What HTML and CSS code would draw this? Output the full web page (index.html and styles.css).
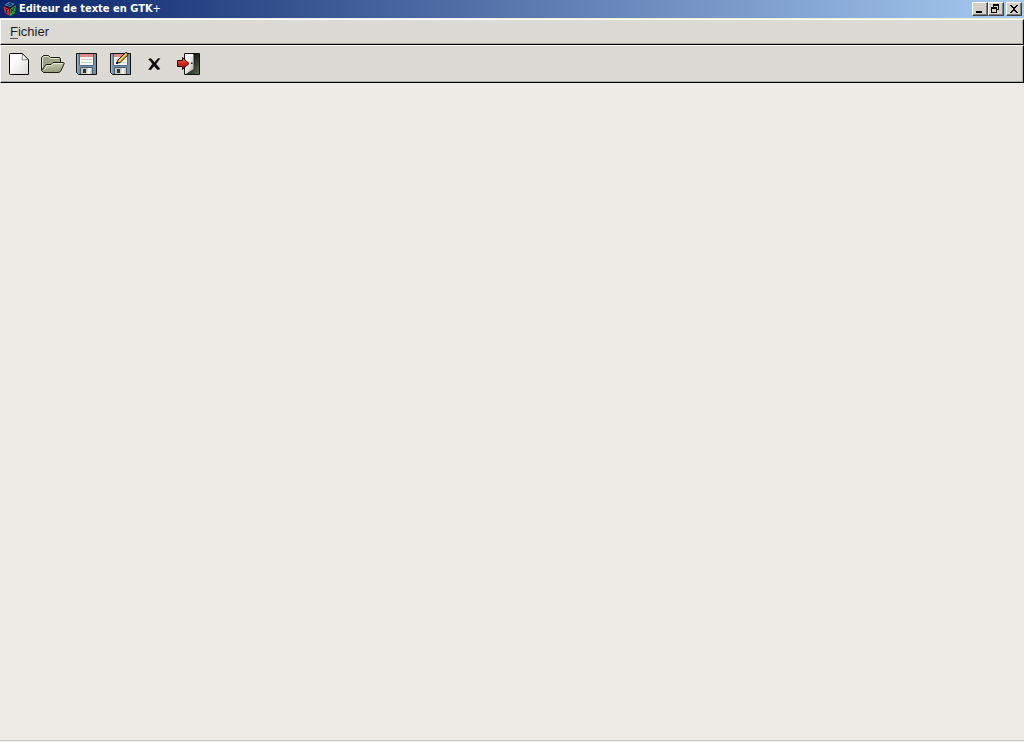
FILE: index.html
```html
<!DOCTYPE html>
<html lang="fr">
<head>
    <meta charset="UTF-8">
    <meta name="viewport" content="width=device-width, initial-scale=1.0">
    <title>Editeur de texte en GTK+</title>
    <link rel="stylesheet" href="styles.css">
</head>
<body>

    <header class="titlebar">
        <!-- Logo GTK -->
        <svg class="logo" viewBox="0 0 16 16" aria-hidden="true">
            <path d="M1 4L7 1L14 3L13 12L8 15L3 12Z" fill="#15182c"/>
            <path d="M1 5L7 8L8 15L3 12Z" fill="#e3203c"/>
            <path d="M14 4L8 8V15L13 12Z" fill="#2fa04c"/>
            <path d="M2 4L7 1L13 3L8 6Z" fill="#3c7cc4"/>
            <path d="M5 3.500L8 4.500L10 3M7 2.500L9 3" fill="none" stroke="#101c3c"/>
            <path d="M3 7.500L6 9M4.500 8V12" fill="none" stroke="#34101c"/>
            <path d="M9.500 8V12M12.500 6L10.500 9.500L12.500 10.500" fill="none" stroke="#0c2c1c"/>
        </svg>
        <h1 class="title">Editeur de texte en GTK<span class="plus">+</span></h1>
        <div class="controls">
            <button type="button" class="control" aria-label="Réduire">
                <svg viewBox="0 0 12 10" shape-rendering="crispEdges"><path d="M2 7h6v2H2z"/></svg>
            </button>
            <button type="button" class="control" aria-label="Restaurer">
                <svg viewBox="0 0 12 10" shape-rendering="crispEdges"><path d="M3 0h6v6H7V5h1V2H4v1H3zM1 3h6v6H1zM2 5v3h4V5z" fill-rule="evenodd"/></svg>
            </button>
            <button type="button" class="control close" aria-label="Fermer">
                <svg viewBox="0 0 12 10" shape-rendering="crispEdges"><path d="M2 1h2v1h1v1h2V2h1V1h2v1H9v1H8v1H7v2h1v1h1v1h1v1H8V8H7V7H5v1H4v1H2V8h1V7h1V6h1V4H4V3H3V2H2z"/></svg>
            </button>
        </div>
    </header>

    <nav class="menubar">
        <button type="button" class="menu"><span class="mnemonic">F</span>ichier</button>
    </nav>

    <div class="toolbar" role="toolbar" aria-label="Outils">
        <!-- Nouveau -->
        <button type="button" class="tool" aria-label="Nouveau">
            <svg viewBox="0 0 24 24">
                <defs>
                    <linearGradient id="paper" x1="0" y1="0" x2="1" y2="1">
                        <stop offset="0.3" stop-color="#ffffff"/>
                        <stop offset="1" stop-color="#d8d8d2"/>
                    </linearGradient>
                </defs>
                <path d="M3.500 1.500H15.500L21.500 7.500V22.500H3.500Q2.500 22.500 2.500 21.500V2.500Q2.500 1.500 3.500 1.500Z" fill="url(#paper)" stroke="#000"/>
                <path d="M15.500 2L15 8L21 7.500Z" fill="#fff" stroke="#555" stroke-width="0.7"/>
            </svg>
        </button>
        <!-- Ouvrir -->
        <button type="button" class="tool" aria-label="Ouvrir">
            <svg viewBox="0 0 24 24">
                <defs>
                    <linearGradient id="folder" x1="0" y1="0" x2="0" y2="1">
                        <stop offset="0" stop-color="#c6cab0"/>
                        <stop offset="1" stop-color="#949a7a"/>
                    </linearGradient>
                </defs>
                <path d="M0.500 18.500V5.500L2.500 3.500H7.500L9.500 5.500H18.500L19.500 7V10" fill="#9ea388" stroke="#1c1f12"/>
                <path d="M1.500 16V6L3 4.500H7L9 6.500H18" fill="none" stroke="#dfe3ca"/>
                <path d="M0.500 18.500L5 12.500H10L12 10.500H22.500Q23.500 10.500 23 12L20 18.500Q19 20.500 17.500 20.500H2.500Z" fill="url(#folder)" stroke="#1c1f12"/>
                <path d="M3.500 17.500L6 13.500H10.500L12.500 11.500H22" fill="none" stroke="#e6e9d4"/>
            </svg>
        </button>
        <!-- Enregistrer -->
        <button type="button" class="tool" aria-label="Enregistrer">
            <svg viewBox="0 0 24 24">
                <path d="M1.500 1.500H21.500V22.500H3.500L1.500 20.500Z" fill="#7392aa" stroke="#111"/>
                <path d="M2.500 20V2.500" stroke="#9bb8cf"/>
                <path d="M5 2H18V13H5Z" fill="#f8f8f4"/>
                <path d="M5 2H18V5H5Z" fill="#df8888"/>
                <path d="M6 7.500H17M6 10.500H17" stroke="#cfcfcb"/>
                <path d="M4.500 2V12.500Q4.500 13.500 5.500 13.500H17.500Q18.500 13.500 18.500 12.500V2" fill="none" stroke="#53697c"/>
                <path d="M6 15H17V22H6Z" fill="#c6c6be"/>
                <path d="M5.500 22V15.500H17.500V22" fill="none" stroke="#4c5c6c"/>
                <path d="M8 17H11V21H8Z" fill="#333"/>
                <path d="M13 16L12 22H15L16 16Z" fill="#eeeeea"/>
            </svg>
        </button>
        <!-- Enregistrer sous -->
        <button type="button" class="tool" aria-label="Enregistrer sous">
            <svg viewBox="0 0 24 24">
                <path d="M1.500 1.500H21.500V22.500H3.500L1.500 20.500Z" fill="#7392aa" stroke="#111"/>
                <path d="M2.500 20V2.500" stroke="#9bb8cf"/>
                <path d="M5 2H18V13H5Z" fill="#f8f8f4"/>
                <path d="M5 2H18V5H5Z" fill="#df8888"/>
                <path d="M6 7.500H17M6 10.500H17" stroke="#cfcfcb"/>
                <path d="M4.500 2V12.500Q4.500 13.500 5.500 13.500H17.500Q18.500 13.500 18.500 12.500V2" fill="none" stroke="#53697c"/>
                <path d="M6 15H17V22H6Z" fill="#c6c6be"/>
                <path d="M5.500 22V15.500H17.500V22" fill="none" stroke="#4c5c6c"/>
                <path d="M8 17H11V21H8Z" fill="#333"/>
                <path d="M13 16L12 22H15L16 16Z" fill="#eeeeea"/>
                <path d="M7.500 11.500L9 8L16.500 0.800H18L19 2.800L11 10.500Z" fill="#f0c22e" stroke="#111"/>
                <path d="M10 9L17 2" stroke="#ffe070"/>
                <path d="M7 12L8 9.500L9.500 11Z" fill="#000"/>
            </svg>
        </button>
        <!-- Fermer -->
        <button type="button" class="tool" aria-label="Fermer le fichier">
            <svg viewBox="0 0 24 24">
                <path d="M5.500 7.500Q7.500 5.500 9 7.500L11.500 10.500L15 6.500L17 6.500L13 12L15.500 15L17 17L14.500 17.800L11 14L8 17.800L5.500 17.500L9.500 12L7.500 9Z" fill="#0a0a0a" stroke="#0a0a0a" stroke-width="0.4"/>
            </svg>
        </button>
        <!-- Quitter -->
        <button type="button" class="tool" aria-label="Quitter">
            <svg viewBox="0 0 24 24">
                <defs>
                    <linearGradient id="room" x1="0" y1="0" x2="1" y2="1">
                        <stop offset="0.3" stop-color="#0c0e0b"/>
                        <stop offset="1" stop-color="#5e7058"/>
                    </linearGradient>
                    <linearGradient id="door" x1="0" y1="0" x2="1" y2="1">
                        <stop offset="0.3" stop-color="#ffffff"/>
                        <stop offset="1" stop-color="#a8aca2"/>
                    </linearGradient>
                    <linearGradient id="arrow" x1="0" y1="0" x2="0" y2="1">
                        <stop offset="0" stop-color="#f27a62"/>
                        <stop offset="0.5" stop-color="#d3281c"/>
                        <stop offset="1" stop-color="#8c0f0a"/>
                    </linearGradient>
                </defs>
                <path d="M7.500 1.500H22.500V22.500H7.500Z" fill="url(#room)" stroke="#111"/>
                <path d="M8 2H16.500V17L9 22H8Z" fill="url(#door)"/>
                <path d="M14 10.500H15.500V12H14Z" fill="#222"/>
                <path d="M0.500 8.500H5.500V5.500L12 11.500L5.500 17.500V14.500H0.500Z" fill="url(#arrow)" stroke="#2c0502"/>
            </svg>
        </button>
    </div>

    <main class="workspace"></main>

</body>
</html>
```

FILE: styles.css
```css
* {
    box-sizing: border-box;
}

body {
    margin: 0;
    min-height: 100vh;
    display: flex;
    flex-direction: column;
    background: #eeebe6;
    color: #000;
    font-family: "Liberation Sans", Arial, sans-serif;
    font-size: 13px;
}

button {
    margin: 0;
    padding: 0;
    border: 0;
    background: none;
    color: inherit;
    font: inherit;
}

/* Barre de titre */
.titlebar {
    display: flex;
    align-items: center;
    height: 18px;
    padding: 0 2px;
    background: linear-gradient(to right, #0a246a, #a6caf0);
}

.logo {
    width: 16px;
    height: 16px;
    margin-right: 1px;
}

.title {
    flex: 1;
    margin: 0;
    color: #fff;
    font-family: "DejaVu Sans Condensed", "DejaVu Sans", sans-serif;
    font-size: 11px;
    font-weight: bold;
    line-height: 18px;
    white-space: nowrap;
}

.plus {
    font-weight: normal;
}

.controls {
    display: flex;
}

.control {
    display: flex;
    width: 16px;
    height: 14px;
    padding: 1px;
    background: #d4d0c8;
    border: 1px solid;
    border-color: #fff #404040 #404040 #fff;
    box-shadow: inset -1px -1px #808080;
}

.control svg {
    width: 12px;
    height: 10px;
}

.close {
    margin-left: 2px;
}

/* Menu et barre d'outils */
.menubar,
.toolbar {
    display: flex;
    background: #dcdad5;
    border: 1px solid;
    border-color: #fff #000 #000 #fff;
    box-shadow: inset -1px -1px #aaa8a2;
}

.menubar {
    height: 26px;
    margin-top: 1px;
    padding: 0 4px;
}

.menu {
    padding: 0 5px;
    color: #1c1c1c;
    line-height: 24px;
}

.mnemonic {
    text-decoration: underline;
    text-decoration-color: #555;
    text-underline-offset: 2px;
}

.toolbar {
    height: 38px;
    padding: 1px;
}

.tool {
    display: flex;
    align-items: center;
    justify-content: center;
    width: 34px;
    height: 34px;
}

.tool svg {
    width: 24px;
    height: 24px;
}

/* Zone de travail */
.workspace {
    flex: 1;
    margin-bottom: 1px;
    border-bottom: 1px solid #d0cdc4;
}
```
